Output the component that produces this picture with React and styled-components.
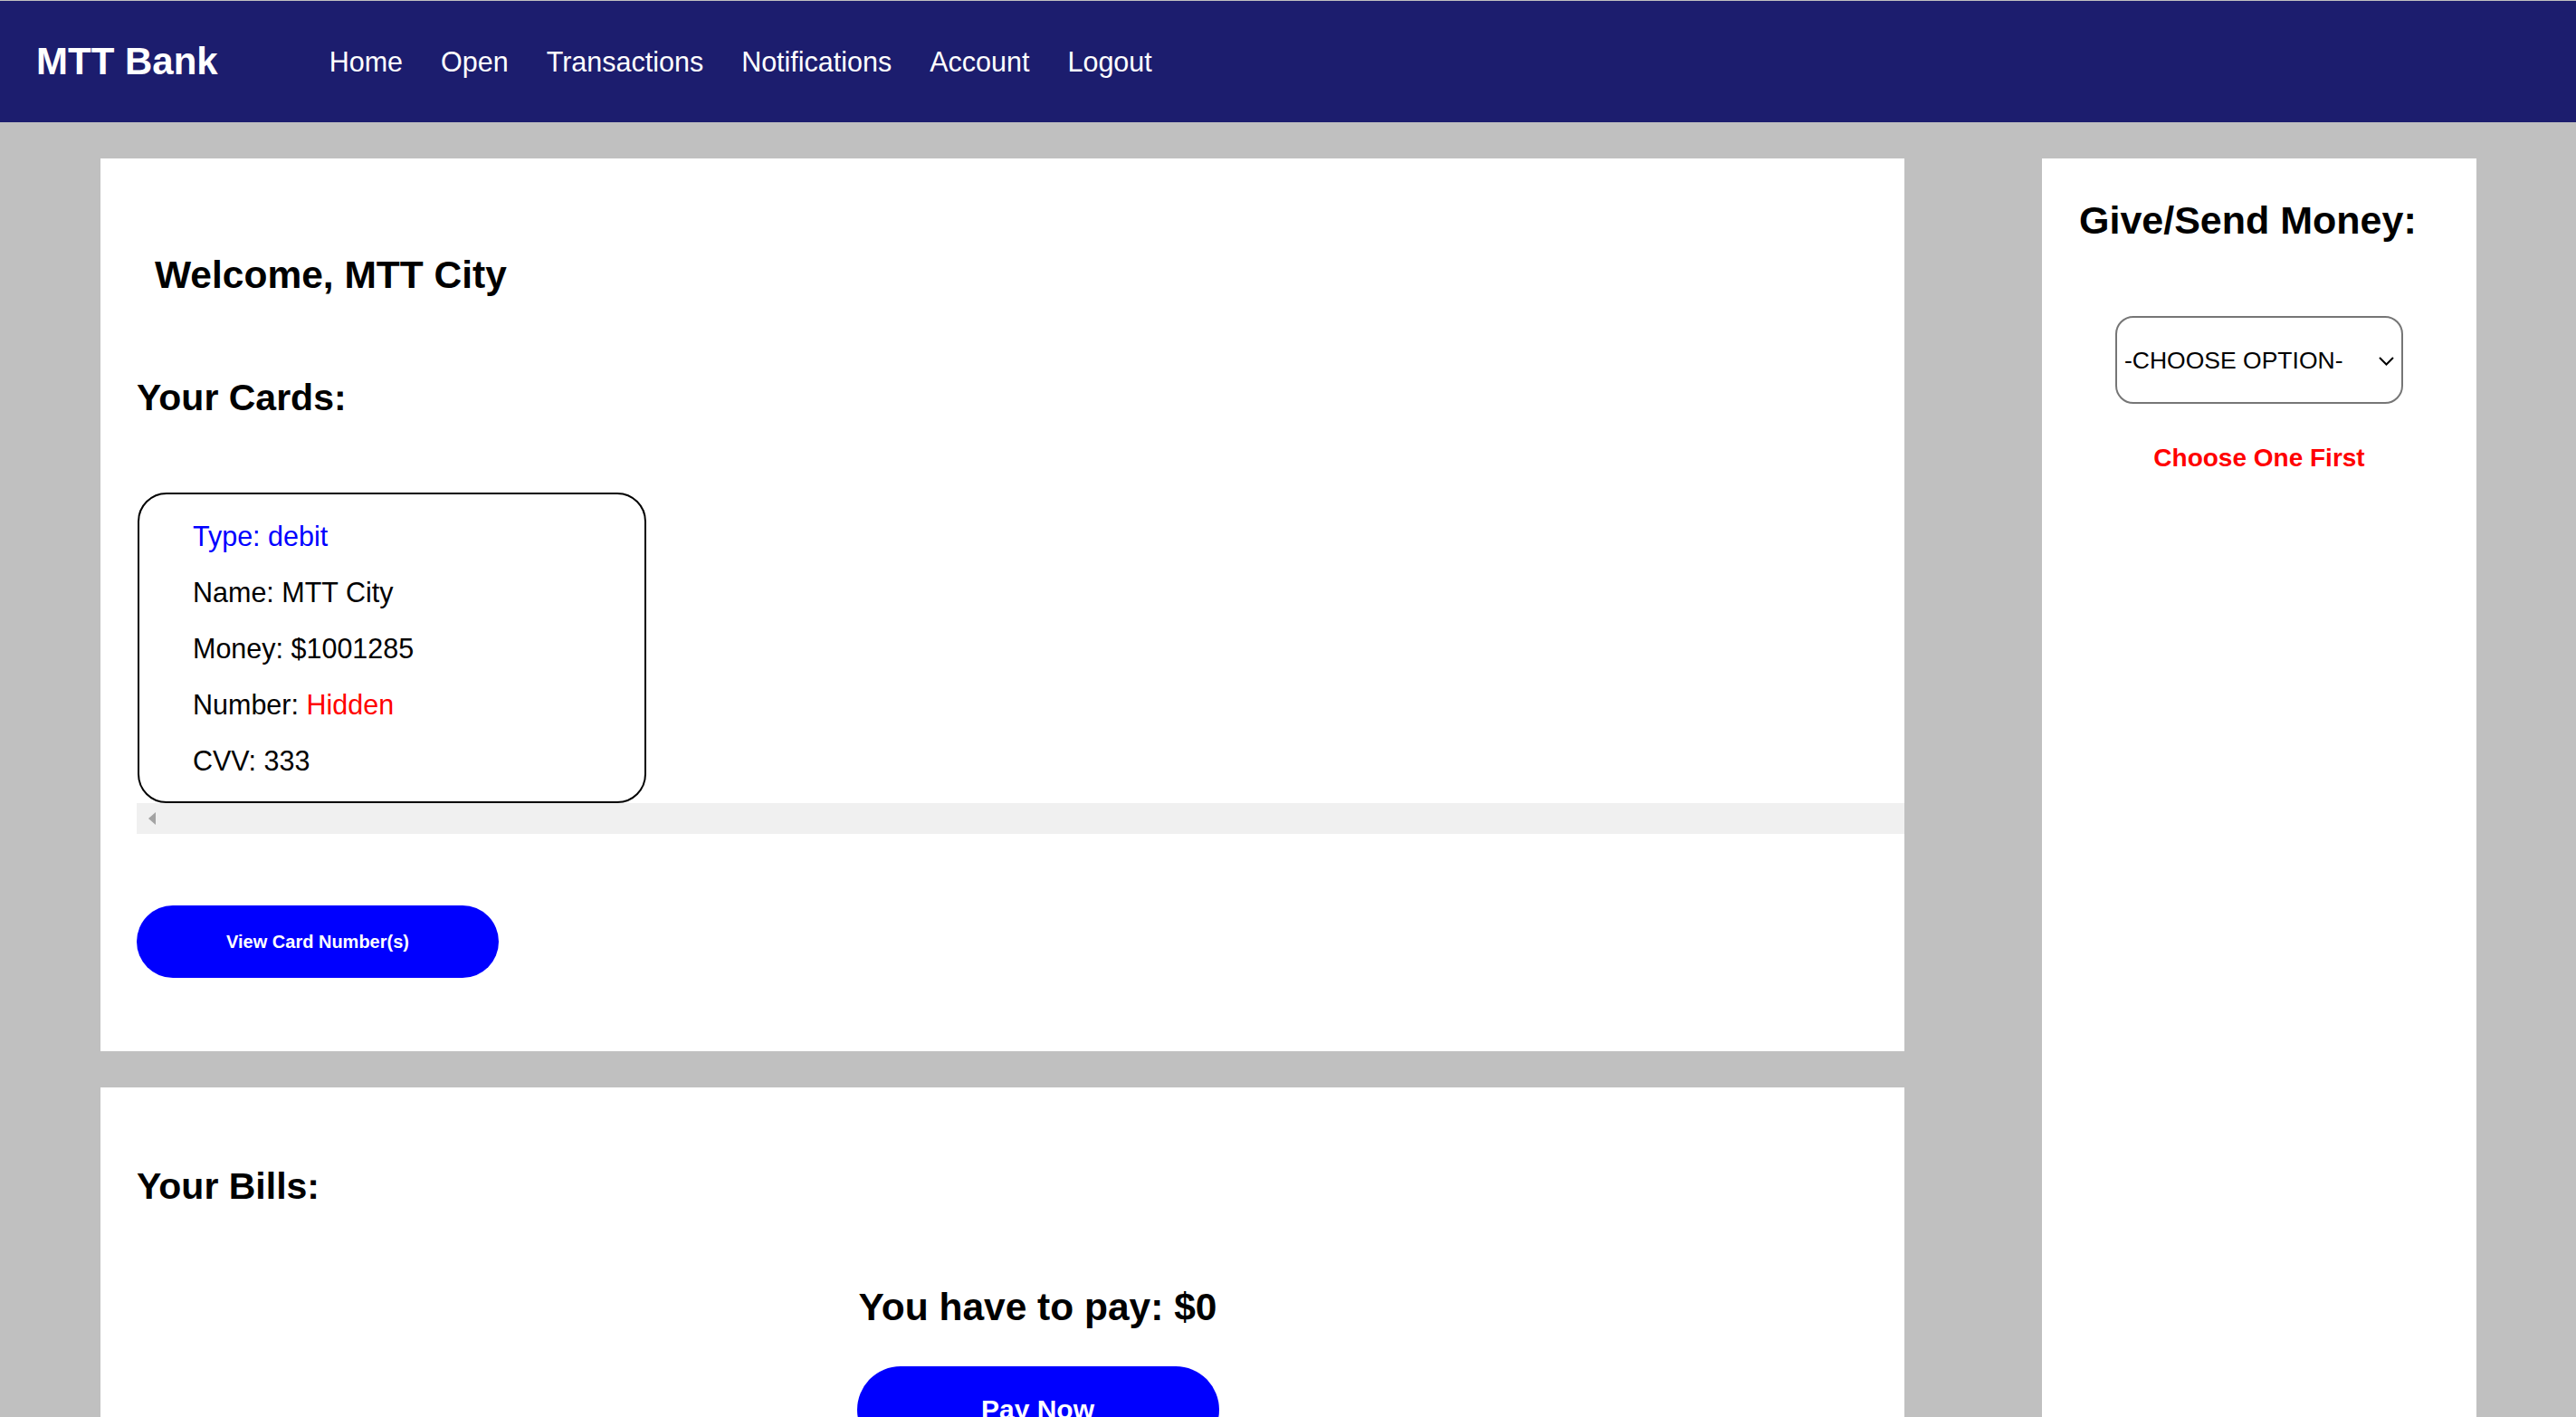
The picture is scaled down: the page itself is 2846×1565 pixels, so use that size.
import styled, { createGlobalStyle } from "styled-components";

const GlobalStyle = createGlobalStyle`
  html, body {
    margin: 0;
    padding: 0;
    background: #c0c0c0;
    font-family: "Liberation Sans", Arial, sans-serif;
    color: #000;
  }
`

const Page = styled.div`
  padding-top: 1px;
  min-height: 100vh;
`

const NavBar = styled.nav`
  height: 134px;
  background: #1c1d6e;
  display: flex;
  align-items: center;
  padding-left: 40px;
`

const Logo = styled.div`
  color: #fff;
  font-size: 42px;
  font-weight: bold;
  margin-right: 123px;
`

const NavLinks = styled.div`
  display: flex;
  gap: 42px;
`

const NavLink = styled.a`
  color: #fff;
  font-size: 30.5px;
  text-decoration: none;
  cursor: pointer;
`

const Main = styled.main`
  display: grid;
  grid-template-columns: 1993px 480px;
  justify-content: space-between;
  padding: 40px 110px 0 111px;
`

const LeftColumn = styled.div`
  display: flex;
  flex-direction: column;
  gap: 40px;
`

const Panel = styled.section`
  background: #fff;
  padding: ${(p) => p.$top || 0}px 0 ${(p) => p.$bottom || 0}px 40px;
`

const Welcome = styled.h1`
  margin: 0 0 0 20px;
  font-size: 42.5px;
  line-height: 1.15;
  font-weight: bold;
`

const SectionTitle = styled.h2`
  margin: ${(p) => p.$top || 0}px 0 0 0;
  font-size: 41px;
  line-height: 1.15;
  font-weight: bold;
`

const CardBox = styled.div`
  box-sizing: border-box;
  width: 562px;
  margin: 81px 0 0 1px;
  border: 2px solid #000;
  border-radius: 32px;
  padding: 15px 20px 14px 59px;
`

const CardLine = styled.div`
  font-size: 30.5px;
  line-height: 62px;
  color: ${(p) => p.$color || "#000"};
`

const Red = styled.span`
  color: #ff0000;
`

const ScrollTrack = styled.div`
  height: 34px;
  background: #f0f0f0;
  display: flex;
  align-items: center;
  padding-left: 13px;
`

const ScrollArrow = styled.div`
  width: 0;
  height: 0;
  border-top: 7px solid transparent;
  border-bottom: 7px solid transparent;
  border-right: 8px solid #a3a3a3;
`

const PillButton = styled.button`
  width: 400px;
  height: ${(p) => p.$height}px;
  border: none;
  border-radius: 48px;
  background: #0000ff;
  color: #fff;
  font-family: inherit;
  font-weight: bold;
  font-size: ${(p) => p.$size}px;
  cursor: pointer;
  margin-top: ${(p) => p.$top || 0}px;
`

const PaySection = styled.div`
  display: flex;
  flex-direction: column;
  align-items: center;
  padding-left: 38px;
  margin-top: 86px;
`

const PayTitle = styled.h2`
  margin: 0;
  font-size: 42.5px;
  line-height: 1.15;
  font-weight: bold;
`

const SendPanel = styled.aside`
  background: #fff;
  padding: 44px 0 40px 0;
  display: flex;
  flex-direction: column;
`

const SendTitle = styled.h2`
  margin: 0 0 0 41px;
  font-size: 43px;
  line-height: 1.15;
  font-weight: bold;
`

const SelectWrap = styled.div`
  position: relative;
  align-self: center;
  margin-top: 81px;
`

const Select = styled.select`
  appearance: none;
  box-sizing: border-box;
  width: 318px;
  height: 97px;
  border: 2px solid #767676;
  border-radius: 20px;
  background: #fff;
  padding: 0 40px 0 8px;
  font-family: "Liberation Sans", Arial, sans-serif;
  font-size: 26.5px;
  color: #000;
`

const Chevron = styled.svg`
  position: absolute;
  right: 10px;
  top: 45px;
  pointer-events: none;
`

const Warning = styled.p`
  margin: 44px 0 0 0;
  text-align: center;
  color: #ff0000;
  font-size: 28px;
  line-height: 1.15;
  font-weight: bold;
`

export default function App() {
  return (
    <Page>
      <GlobalStyle />
      <NavBar>
        <Logo>MTT Bank</Logo>
        <NavLinks>
          <NavLink>Home</NavLink>
          <NavLink>Open</NavLink>
          <NavLink>Transactions</NavLink>
          <NavLink>Notifications</NavLink>
          <NavLink>Account</NavLink>
          <NavLink>Logout</NavLink>
        </NavLinks>
      </NavBar>
      <Main>
        <LeftColumn>
          <Panel $top={105} $bottom={81}>
            <Welcome>Welcome, MTT City</Welcome>
            <SectionTitle $top={87}>Your Cards:</SectionTitle>
            <CardBox>
              <CardLine $color="#0000ff">Type: debit</CardLine>
              <CardLine>Name: MTT City</CardLine>
              <CardLine>Money: $1001285</CardLine>
              <CardLine>Number: <Red>Hidden</Red></CardLine>
              <CardLine>CVV: 333</CardLine>
            </CardBox>
            <ScrollTrack>
              <ScrollArrow />
            </ScrollTrack>
            <PillButton $height={80} $size={20} $top={79}>View Card Number(s)</PillButton>
          </Panel>
          <Panel $top={86} $bottom={60}>
            <SectionTitle>Your Bills:</SectionTitle>
            <PaySection>
              <PayTitle>You have to pay: $0</PayTitle>
              <PillButton $height={96} $size={30} $top={40}>Pay Now</PillButton>
            </PaySection>
          </Panel>
        </LeftColumn>
        <SendPanel>
          <SendTitle>Give/Send Money:</SendTitle>
          <SelectWrap>
            <Select defaultValue="">
              <option value="">-CHOOSE OPTION-</option>
              <option value="give">Give</option>
              <option value="send">Send</option>
            </Select>
            <Chevron width="17" height="10" viewBox="0 0 17 10">
              <polyline points="1,1 8.5,8.5 16,1" fill="none" stroke="#000" strokeWidth="2" />
            </Chevron>
          </SelectWrap>
          <Warning>Choose One First</Warning>
        </SendPanel>
      </Main>
    </Page>
  )
}
